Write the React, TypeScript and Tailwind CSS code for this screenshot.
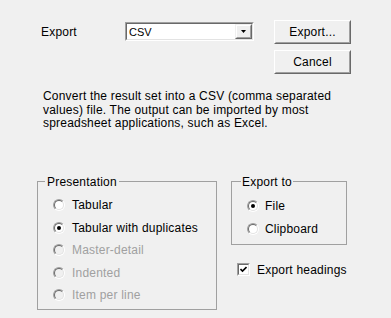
import React from "react";

function Radio({ checked, disabled }: { checked?: boolean; disabled?: boolean }) {
  return (
    <div className="w-[12px] h-[12px] rounded-full border border-t-[#a0a0a0] border-l-[#a0a0a0] border-b-white border-r-white shrink-0">
      <div
        className={
          "w-full h-full rounded-full border border-t-[#696969] border-l-[#696969] border-b-[#e3e3e3] border-r-[#e3e3e3] flex items-center justify-center " +
          (disabled ? "bg-[#f0f0f0]" : "bg-white")
        }
      >
        {checked ? <div className="w-[4px] h-[4px] rounded-full bg-black" /> : null}
      </div>
    </div>
  );
}

function RadioRow({
  label,
  checked,
  disabled,
  cls,
  gap,
}: {
  label: string;
  checked?: boolean;
  disabled?: boolean;
  cls: string;
  gap: string;
}) {
  return (
    <div className={"flex items-center " + cls}>
      <Radio checked={checked} disabled={disabled} />
      <span className={gap + " " + (disabled ? "text-[#a0a0a0]" : "text-black")}>{label}</span>
    </div>
  );
}

function Button({ label }: { label: string }) {
  return (
    <div className="w-[77px] h-[24px] border border-t-white border-l-white border-b-[#696969] border-r-[#696969] bg-[#f0f0f0]">
      <div className="w-full h-full border border-t-[#f0f0f0] border-l-[#f0f0f0] border-b-[#a0a0a0] border-r-[#a0a0a0] flex items-center justify-center text-black">
        {label}
      </div>
    </div>
  );
}

export default function App() {
  return (
    <div
      className="w-[391px] h-[318px] bg-[#f0f0f0] text-black text-[12px] leading-[14px] tracking-[0.2px] overflow-hidden"
      style={{ fontFamily: '"Liberation Sans", Arial, sans-serif' }}
    >
      {/* Top row */}
      <div className="flex items-start pt-[20px] pl-[41px]">
        <div className="w-[84px] h-[24px] flex items-center">Export</div>
        <div className="mt-[2px] w-[129px] h-[19px] border border-t-[#a0a0a0] border-l-[#a0a0a0] border-b-white border-r-white">
          <div className="w-full h-full border border-t-[#696969] border-l-[#696969] border-b-[#e3e3e3] border-r-[#e3e3e3] bg-white flex items-center">
            <span className="flex-1 pl-[2px] text-[11px] tracking-normal">CSV</span>
            <div className="w-[17px] h-[15px] border border-t-[#f0f0f0] border-l-[#f0f0f0] border-b-[#696969] border-r-[#696969] bg-[#f0f0f0]">
              <div className="w-full h-full border border-t-white border-l-white border-b-[#a0a0a0] border-r-[#a0a0a0] flex items-center justify-center">
                <svg width="5" height="3" viewBox="0 0 5 3">
                  <polygon points="0,0 5,0 2.5,3" fill="#000" />
                </svg>
              </div>
            </div>
          </div>
        </div>
        <div className="ml-[20px] flex flex-col gap-[6px]">
          <Button label="Export..." />
          <Button label="Cancel" />
        </div>
      </div>

      {/* Description */}
      <p className="mt-[16px] pl-[43px] w-[345px] leading-[13.5px]">
        Convert the result set into a CSV (comma separated values) file. The output can be imported by most
        spreadsheet applications, such as Excel.
      </p>

      {/* Bottom */}
      <div className="flex items-start pl-[37px] mt-[44px]">
        <fieldset className="w-[180px] h-[135px] border border-[#a0a0a0]">
          <legend className="ml-[7px] px-[2px] leading-[14px]">Presentation</legend>
          <div className="pl-[15px]">
            <RadioRow label="Tabular" gap="ml-[7px]" cls="mt-[5px] h-[22px]" />
            <RadioRow label="Tabular with duplicates" gap="ml-[7px]" checked cls="mt-[1px] h-[22px]" />
            <RadioRow label="Master-detail" gap="ml-[7px]" disabled cls="h-[22px]" />
            <RadioRow label="Indented" gap="ml-[7px]" disabled cls="mt-[1px] h-[22px]" />
            <RadioRow label="Item per line" gap="ml-[7px]" disabled cls="h-[22px]" />
          </div>
        </fieldset>
        <div className="ml-[14px] flex flex-col">
          <fieldset className="w-[116px] h-[70px] border border-[#a0a0a0]">
            <legend className="ml-[9px] px-[1px] leading-[14px]">Export to</legend>
            <div className="pl-[15px]">
              <RadioRow label="File" gap="ml-[6px]" checked cls="mt-[6px] h-[22px]" />
              <RadioRow label="Clipboard" gap="ml-[6px]" cls="mt-[1px] h-[22px]" />
            </div>
          </fieldset>
          <div className="flex items-center mt-[18px] ml-[6px] h-[14px]">
            <div className="w-[13px] h-[13px] border border-t-[#a0a0a0] border-l-[#a0a0a0] border-b-white border-r-white">
              <div className="w-full h-full border border-t-[#696969] border-l-[#696969] border-b-[#e3e3e3] border-r-[#e3e3e3] bg-white flex items-center justify-center">
                <svg width="7" height="7" viewBox="0 0 7 7">
                  <polyline points="0.5,3 2.5,5 6.5,1" fill="none" stroke="#000" strokeWidth="1.6" />
                </svg>
              </div>
            </div>
            <span className="ml-[7px]">Export headings</span>
          </div>
        </div>
      </div>
    </div>
  );
}
